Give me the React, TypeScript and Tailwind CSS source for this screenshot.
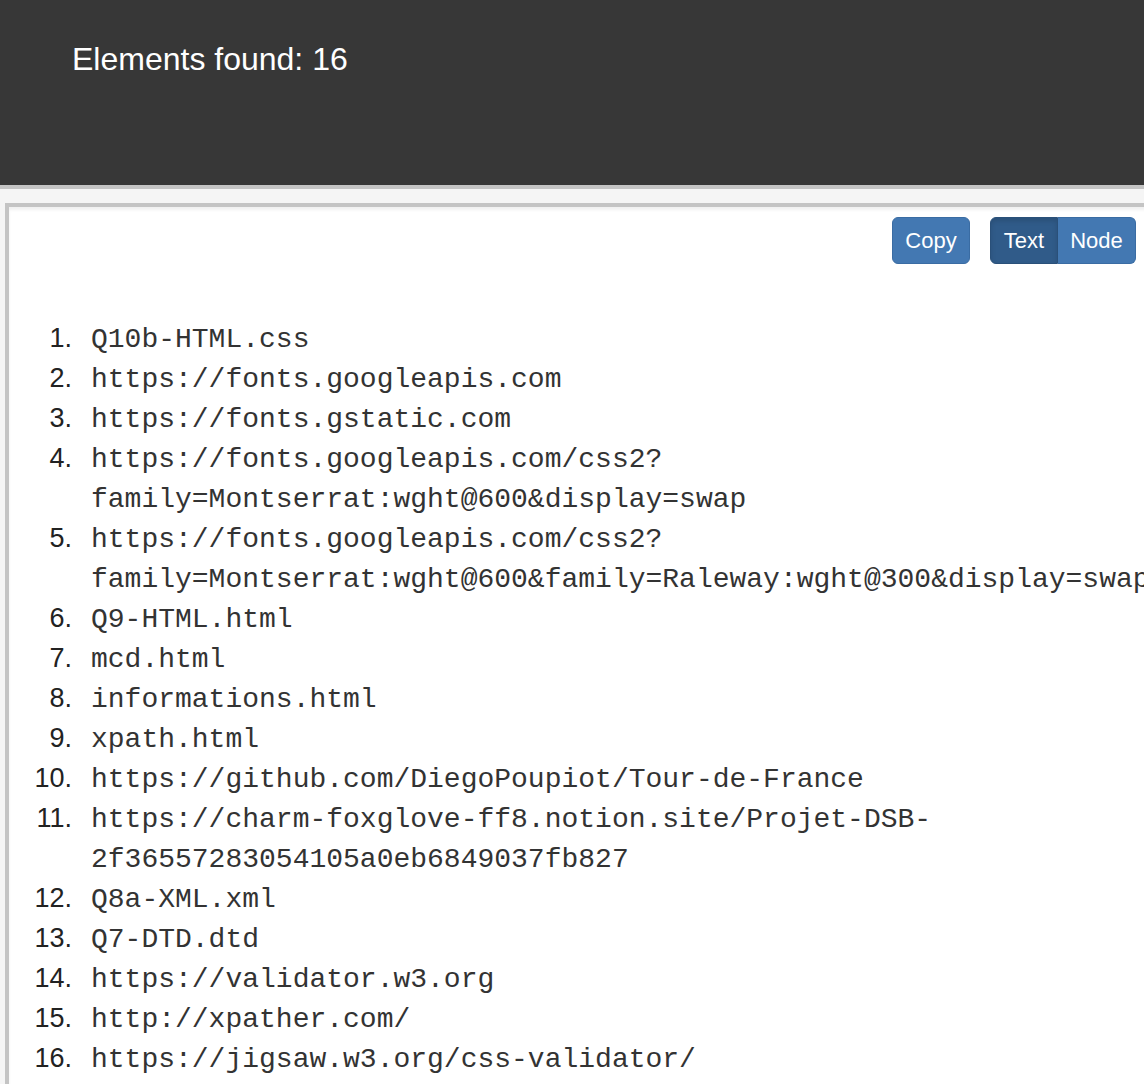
import React from 'react';

const ITEMS: string[][] = [
  ['Q10b-HTML.css'],
  ['https://fonts.googleapis.com'],
  ['https://fonts.gstatic.com'],
  ['https://fonts.googleapis.com/css2?', 'family=Montserrat:wght@600&display=swap'],
  ['https://fonts.googleapis.com/css2?', 'family=Montserrat:wght@600&family=Raleway:wght@300&display=swap'],
  ['Q9-HTML.html'],
  ['mcd.html'],
  ['informations.html'],
  ['xpath.html'],
  ['https://github.com/DiegoPoupiot/Tour-de-France'],
  ['https://charm-foxglove-ff8.notion.site/Projet-DSB-', '2f36557283054105a0eb6849037fb827'],
  ['Q8a-XML.xml'],
  ['Q7-DTD.dtd'],
  ['https://validator.w3.org'],
  ['http://xpather.com/'],
  ['https://jigsaw.w3.org/css-validator/'],
];

export default function App() {
  return (
    <div className="w-[1144px] h-[1084px] overflow-hidden bg-[#f5f5f5] font-['Liberation_Sans',Arial,sans-serif]">
      {/* Header */}
      <header className="h-[189px] bg-[#373737] border-b-4 border-[#c4c4c4] pl-[72px] pt-[39px]">
        <h1 className="text-white text-[32px] leading-[40px]">Elements found: 16</h1>
      </header>

      {/* Result panel */}
      <div className="pt-[14px] pl-[5px]">
        <div className="w-[1150px] h-[1000px] bg-white border-4 border-[#c4c4c4] pr-[15px] pt-[10px] shadow-[inset_0_3px_3px_rgba(0,0,0,0.06)]">
          <div className="flex justify-end items-center gap-[20px]">
            <button className="w-[78px] h-[47px] rounded-[6px] bg-[#4378b2] border border-[#3a6ca3] text-white text-[22px]">
              Copy
            </button>
            <div className="flex h-[47px]">
              <button className="w-[68px] h-full rounded-l-[6px] bg-[#305b89] border border-[#2a5079] text-white text-[22px] shadow-[inset_0_3px_5px_rgba(0,0,0,0.13)]">
                Text
              </button>
              <button className="w-[78px] h-full rounded-r-[6px] bg-[#4378b2] border border-l-0 border-[#3a6ca3] text-white text-[22px]">
                Node
              </button>
            </div>
          </div>

          <ol className="mt-[56px]">
            {ITEMS.map((lines, i) => (
              <li key={i} className="flex items-start">
                <span className="w-[63px] shrink-0 text-right text-[27px] leading-[40px] -mt-[2px] text-[#222]">{i + 1}.</span>
                <div className="ml-[19px] font-['Liberation_Mono','Courier_New',monospace] text-[28px] leading-[40px] text-[#333]">
                  {lines.map((line, j) => (
                    <div key={j} className="h-[40px] whitespace-nowrap">{line}</div>
                  ))}
                </div>
              </li>
            ))}
          </ol>
        </div>
      </div>
    </div>
  );
}
